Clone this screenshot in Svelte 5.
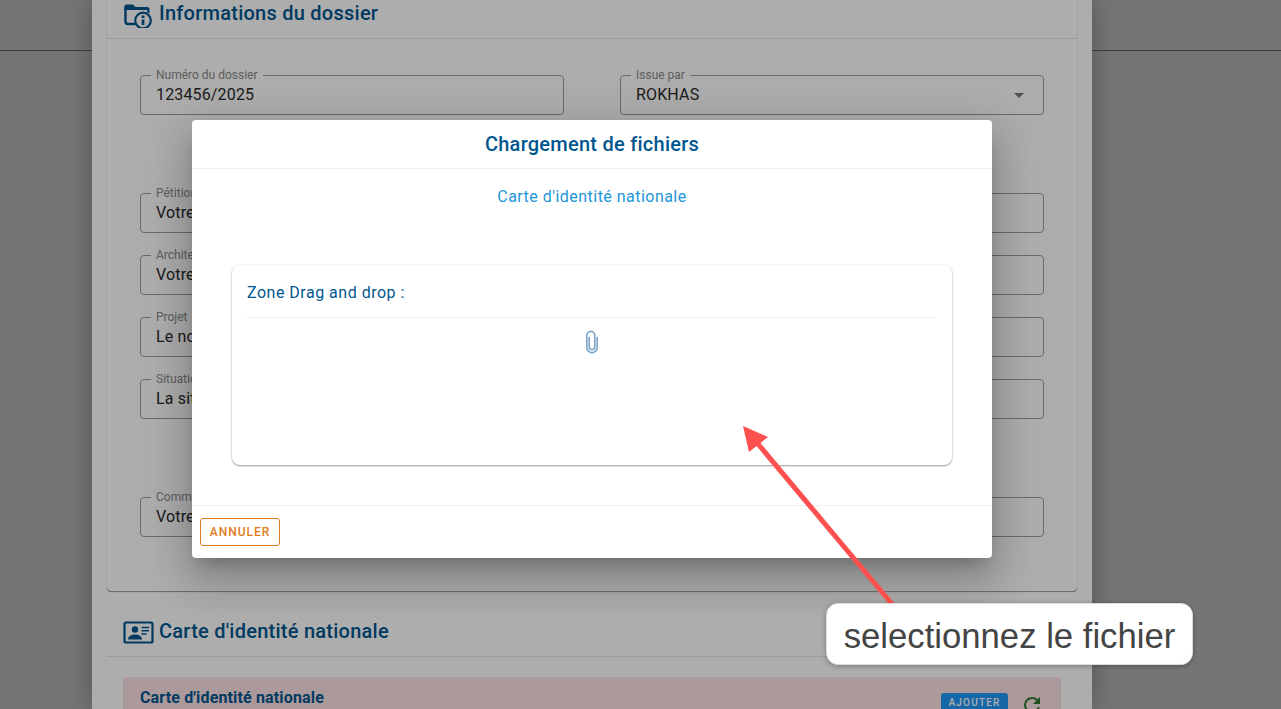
<script>
  const fields = [
    { label: 'Pétitionnaire', value: 'Votre nom complet', top: true },
    { label: 'Architecte', value: 'Votre architecte' },
    { label: 'Projet', value: 'Le nom du projet' },
    { label: 'Situation', value: 'La situation du projet' }
  ];
</script>

<div class="page">
  <header class="topbar"></header>
  <div class="scrim"></div>

  <main class="sheet">
    <section class="card first">
      <div class="card-head">
        <svg class="head-icon" viewBox="0 0 32 28" width="32" height="28" fill="none">
          <path d="M2.500 7V21.500a2.500 2.500 0 0 0 2.500 2.500H12" stroke="currentColor" stroke-width="2.400" />
          <path d="M1.300 10V7A2.500 2.500 0 0 1 3.800 4.500H10l2.500 2.500h11.500A2.500 2.500 0 0 1 26.500 9.500V13h-2.300V10H1.300z" fill="currentColor" />
          <circle cx="20" cy="20.500" r="7.800" stroke="currentColor" stroke-width="2.200" fill="none" />
          <rect x="18.700" y="19.500" width="2.700" height="5.500" fill="currentColor" />
          <rect x="18.700" y="15.500" width="2.700" height="2.500" fill="currentColor" />
        </svg>
        <h2>Informations du dossier</h2>
      </div>
      <div class="form">
        <div class="form-row">
          <div class="field"><span class="legend">Numéro du dossier</span><span class="value">123456/2025</span></div>
          <div class="field">
            <span class="legend">Issue par</span><span class="value">ROKHAS</span><i class="caret"></i>
          </div>
        </div>
        <div class="stack">
          {#each fields as f}
            <div class="field wide"><span class="legend">{f.label}</span><span class="value">{f.value}</span></div>
          {/each}
        </div>
        <div class="field wide last"><span class="legend">Commentaire</span><span class="value">Votre commentaire</span></div>
      </div>
    </section>

    <section class="card">
      <div class="card-head second">
        <svg class="head-icon" viewBox="0 0 32 24" width="32" height="24" fill="none">
          <rect x="1.500" y="2.500" width="28" height="20" rx="1.500" stroke="currentColor" stroke-width="2.200" />
          <circle cx="12" cy="9.500" r="3.200" fill="currentColor" />
          <path d="M5 19.500c0-3.500 3.500-5 7-5s7 1.500 7 5z" fill="currentColor" />
          <path d="M18.500 7.500h7.500M18.500 10.800h7.500M18.500 14h5" stroke="currentColor" stroke-width="1.400" />
        </svg>
        <h2>Carte d'identité nationale</h2>
      </div>
      <div class="doc">
        <strong>Carte d'identité nationale</strong>
        <div class="doc-actions">
          <span class="add">AJOUTER</span>
          <svg viewBox="0 0 24 24" width="24" height="24" fill="#2e7d32">
            <path d="M17.650 6.350A7.960 7.960 0 0 0 12 4a8 8 0 1 0 7.740 10h-2.080A6 6 0 1 1 12 6c1.660 0 3.140.69 4.220 1.780L13 11h7V4z" />
          </svg>
        </div>
      </div>
    </section>
  </main>

  <div class="scrim"></div>

  <div class="dialog">
    <div class="dialog-title">Chargement de fichiers</div>
    <div class="dialog-body">
      <p class="subtitle">Carte d'identité nationale</p>
      <div class="dropzone">
        <div class="zone-title">Zone Drag and drop :</div>
        <div class="zone-body">
          <svg viewBox="0 0 16 24" width="16" height="24" fill="none" stroke="#7ba3c7" stroke-width="1.600">
            <path d="M5.200 7v10a2.800 2.800 0 0 0 5.600 0V5.500a4 4 0 0 0-8 0V17.500a5 5 0 0 0 10.400 0V7" />
          </svg>
        </div>
      </div>
    </div>
    <div class="dialog-foot">
      <button class="cancel">ANNULER</button>
    </div>
  </div>

  <svg class="arrow" width="1281" height="709" viewBox="0 0 1281 709">
    <line x1="892" y1="604" x2="753" y2="438" stroke="#ff5050" stroke-width="5" />
    <polygon points="743,426 768,437 749,452" fill="#ff5050" />
  </svg>
  <div class="callout">selectionnez le fichier</div>
</div>

<style>
  :global(body) {
    margin: 0;
    font-family: Roboto, sans-serif;
  }

  .page {
    position: relative;
    height: 709px;
    overflow: hidden;
    background: #fff;
  }

  .topbar {
    height: 51px;
    box-sizing: border-box;
    border-bottom: 1px solid #888;
    background: #fff;
  }

  .scrim {
    position: absolute;
    inset: 0;
    background: rgba(0, 0, 0, .32);
  }

  .sheet {
    position: absolute;
    top: 0;
    left: 92px;
    width: 1000px;
    height: 709px;
    box-sizing: border-box;
    padding: 0 15px;
    background: #fff;
    box-shadow: 0 0 24px rgba(0, 0, 0, .3);
    overflow: hidden;
  }

  .card {
    border-radius: 4px;
    background: #fff;
    box-shadow: 0 0 1px rgba(0, 0, 0, .25);
  }

  .first {
    margin-top: -10px;
    height: 601px;
    box-shadow: 0 1px 1px rgba(0, 0, 0, .4), 0 0 1px rgba(0, 0, 0, .15);
  }

  .card + .card {
    margin-top: 16px;
  }

  .card-head {
    display: flex;
    align-items: center;
    gap: 4px;
    height: 48px;
    padding-left: 16px;
    border-bottom: 1px solid #e6e6e6;
    color: #00568f;
  }

  .card-head.second {
    height: 49px;
  }

  h2 {
    margin: 0 0 2px;
    font-size: 20px;
    font-weight: 500;
    letter-spacing: .25px;
  }

  .form {
    padding: 36px 33px 0;
  }

  .form-row {
    display: grid;
    grid-template-columns: 424px 424px;
    gap: 56px;
  }

  .stack {
    margin-top: 78px;
    display: flex;
    flex-direction: column;
    gap: 22px;
  }

  .field {
    position: relative;
    height: 40px;
    box-sizing: border-box;
    display: flex;
    align-items: center;
    padding: 0 15px 2px;
    border: 1px solid #9c9c9c;
    border-radius: 4px;
    font-size: 16px;
    letter-spacing: .15px;
    color: #2a2a2a;
  }

  .field.wide {
    width: 904px;
  }

  .field.last {
    margin-top: 78px;
  }

  .legend {
    position: absolute;
    top: -8px;
    left: 10px;
    padding: 0 5px;
    background: #fff;
    font-size: 12px;
    line-height: 14px;
    letter-spacing: 0;
    color: #8a8a8a;
  }

  .caret {
    position: absolute;
    right: 19px;
    top: 17px;
    border: 5px solid transparent;
    border-top-color: #777;
    border-bottom: 0;
  }

  .doc {
    position: relative;
    margin: 20px 16px 0;
    height: 60px;
    box-sizing: border-box;
    padding: 11px 17px;
    background: #fde2e6;
    border-radius: 4px;
    color: #00568f;
    font-size: 16px;
  }

  .doc strong {
    font-weight: 700;
    font-size: 16px;
    letter-spacing: .15px;
  }

  .doc-actions {
    position: absolute;
    top: 16px;
    right: 17px;
    display: flex;
    align-items: flex-start;
    gap: 12px;
  }

  .add {
    width: 67px;
    height: 24px;
    line-height: 19px;
    text-align: center;
    background: #2199f8;
    border-radius: 3px;
    color: #fff;
    font-size: 10px;
    font-weight: 500;
    letter-spacing: 1.200px;
  }

  .dialog {
    position: absolute;
    top: 120px;
    left: 192px;
    width: 800px;
    height: 438px;
    display: flex;
    flex-direction: column;
    border-radius: 4px;
    background: #fff;
    box-shadow: 0 11px 15px -7px rgba(0, 0, 0, .2), 0 24px 38px 3px rgba(0, 0, 0, .14), 0 9px 46px 8px rgba(0, 0, 0, .12);
  }

  .dialog-title {
    height: 48px;
    line-height: 48px;
    text-align: center;
    border-bottom: 1px solid #eee;
    color: #00568f;
    font-size: 20px;
    font-weight: 500;
    letter-spacing: .25px;
  }

  .dialog-body {
    flex: 1;
    padding: 0 40px;
  }

  .subtitle {
    margin: 18px 0 0;
    text-align: center;
    color: #2196d9;
    font-size: 16px;
    line-height: 19px;
    letter-spacing: .47px;
  }

  .dropzone {
    margin-top: 59px;
    height: 200px;
    box-sizing: border-box;
    padding: 0 16px 0 15px;
    border-radius: 8px;
    box-shadow: 0 1px 2px rgba(0, 0, 0, .4), 0 0 2px rgba(0, 0, 0, .06);
  }

  .zone-title {
    height: 52px;
    line-height: 56px;
    border-bottom: 1px solid #eee;
    color: #00568f;
    font-size: 16px;
    letter-spacing: .5px;
  }

  .zone-body {
    display: flex;
    justify-content: center;
    padding-top: 12px;
  }

  .dialog-foot {
    height: 53px;
    box-sizing: border-box;
    padding: 12px 8px;
    border-top: 1px solid #eee;
  }

  .cancel {
    width: 80px;
    height: 28px;
    padding: 0;
    border: 1px solid #e07b20;
    border-radius: 3px;
    background: #fff;
    color: #e07b20;
    font-family: Roboto, sans-serif;
    font-size: 12px;
    font-weight: 500;
    letter-spacing: 1px;
  }

  .arrow {
    position: absolute;
    inset: 0;
    pointer-events: none;
  }

  .callout {
    position: absolute;
    top: 603px;
    left: 826px;
    width: 367px;
    height: 62px;
    box-sizing: border-box;
    line-height: 62px;
    padding-top: 1px;
    text-align: center;
    border: 1px solid #ddd;
    border-radius: 12px;
    background: #fff;
    box-shadow: 0 1px 5px rgba(0, 0, 0, .3);
    color: #444;
    font-family: "Liberation Sans", Arial, sans-serif;
    font-size: 34.700px;
  }
</style>
